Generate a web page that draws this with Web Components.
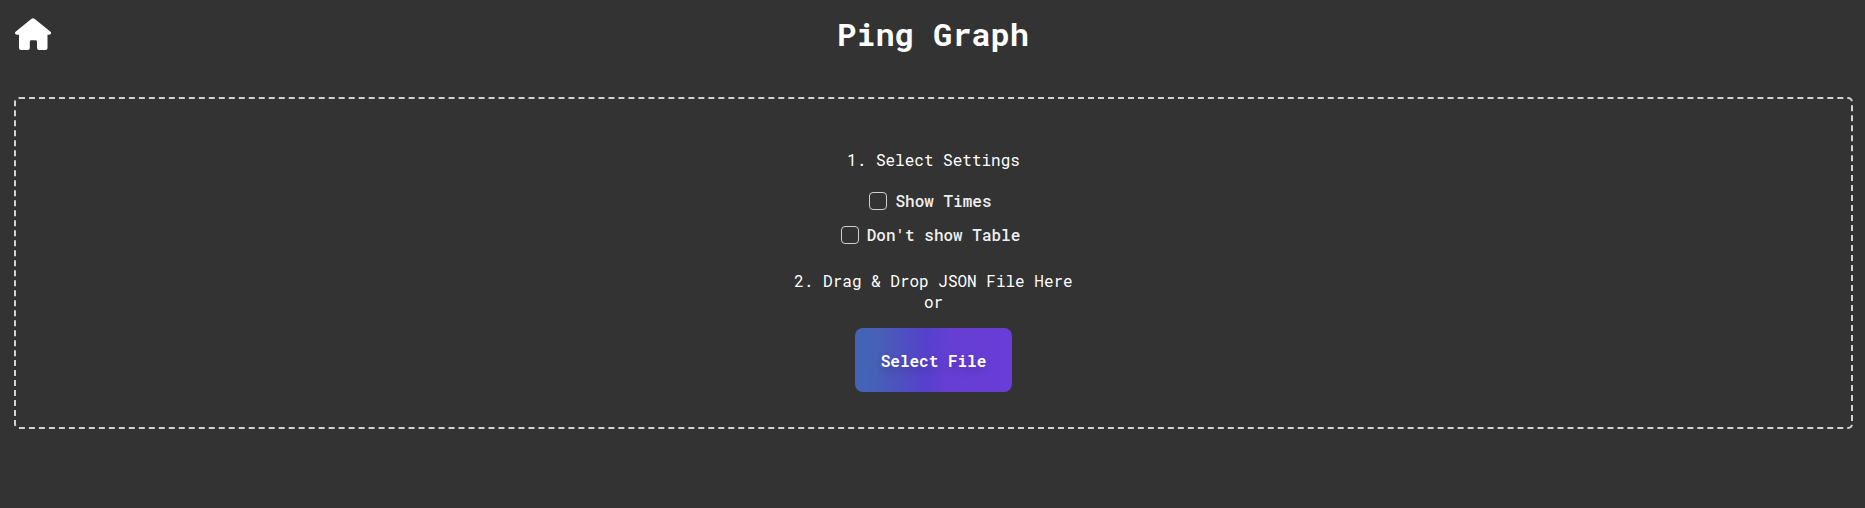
<!DOCTYPE html>
<html lang="en"><head><meta charset="utf-8"><title>Ping Graph</title>
<style>
html,body{margin:0;height:100%;background:#333;overflow:hidden}
body{color:#fff;font:16px/21px "Roboto Mono","DejaVu Sans Mono",monospace;font-variant-ligatures:none}
</style></head><body>
<ping-page></ping-page>
<script>
const define=(name,html)=>customElements.define(name,class extends HTMLElement{
  constructor(){super();this.attachShadow({mode:'open'}).innerHTML=html}
});
define('home-icon',`<style>:host{display:block;width:38px;height:34px}svg{display:block}</style>
<svg width="37" height="33" viewBox="0.500 0 37 34" preserveAspectRatio="none"><path fill="#fff" d="M16.7 1.1Q18.5-.5 20.3 1.1L36 14.2Q37 15.2 36.2 16.6Q35.4 17.3 34.4 17.3H33V31Q33 33 31 33H24.5Q22.5 33 22.5 31V24.5Q22.5 23 21 23H17Q15.300 23 15.300 24.500V31Q15.300 33 13.300 33H6.500Q4.500 33 4.500 31V17.300H2.600Q1.600 17.300.800 16.500Q.100 15.200 1.100 14.200Z"/></svg>`);
define('page-header',`<style>:host{display:grid;grid-template-columns:38px 1fr 38px;align-items:start;height:79px;padding:18px 14px 0 15px}
h1{margin:-5px 0 0;font-size:32px;line-height:42px;font-weight:700;text-align:center}</style>
<home-icon></home-icon><h1><slot></slot></h1>`);
define('check-option',`<style>:host{display:flex;justify-content:center;align-items:center;height:18px;margin-bottom:16px;font-weight:500;color:#f0f0f0}
i{box-sizing:border-box;width:18px;height:18px;border:1px solid #d0d0d0;border-radius:4px;margin-right:8px}label{display:flex;align-items:center;margin-right:6px}span{margin-top:-2px}</style>
<label><i></i><span><slot></slot></span></label>`);
define('file-button',`<style>:host{display:block}button{display:block;width:157px;height:64px;margin:0 auto;padding:0;border:0;border-radius:8px;color:#fff;font:inherit;font-weight:600;text-shadow:0 4px 8px #0003;background:linear-gradient(92deg,#4364b7 0%,#4661b7 14%,#4c54bd 26%,#5541cc 45%,#663ed3 60%,#693dd8 100%)}</style>
<button><slot></slot></button>`);
define('drop-zone',`<style>:host{box-sizing:border-box;display:block;width:1839px;height:332px;margin-left:14px;border:2px dashed #d3d3d3;border-radius:5px;padding-top:50px;text-align:center}
.title{margin-bottom:22px}.drop{margin:26px 0 16px}</style>
<div class="title">1. Select Settings</div>
<check-option>Show Times</check-option><check-option>Don't show Table</check-option>
<div class="drop">2. Drag &amp; Drop JSON File Here<br>or</div><file-button>Select File</file-button>`);
define('ping-page',`<style>:host{display:block}</style><page-header>Ping Graph</page-header><drop-zone></drop-zone>`);
</script></body></html>
